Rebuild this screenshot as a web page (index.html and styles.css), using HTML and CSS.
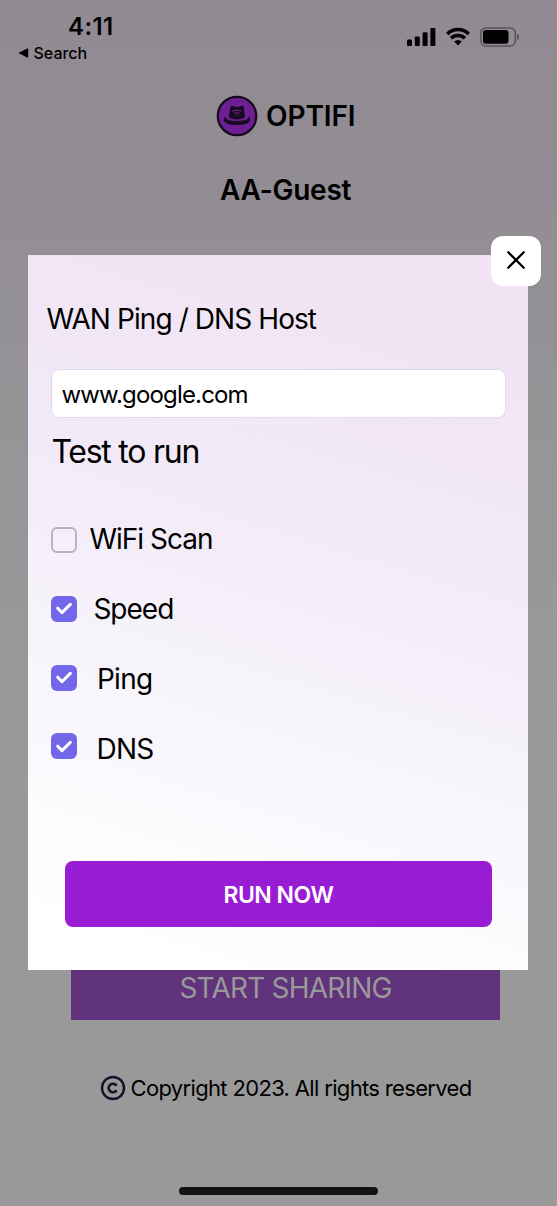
FILE: index.html
```html
<!DOCTYPE html>
<html lang="en">
<head>
<meta charset="utf-8">
<title>Optifi</title>
<link rel="stylesheet" href="styles.css">
</head>
<body>
<div class="screen">
  <header class="status">
    <div class="status-left">
      <div class="time">4:11</div>
      <div class="back"><svg width="11" height="10" viewBox="0 0 11 10"><path d="M.4 5 9.2.5Q10.2 0 10.2 1v8q0 1-1 .5Z"/></svg><span class="back-label">Search</span></div>
    </div>
    <div class="status-icons">
      <svg width="29" height="19" viewBox="0 0 29 19"><rect x="0" y="12.5" width="5" height="6.5" rx="1.2"/><rect x="7.8" y="9.5" width="5" height="9.5" rx="1.2"/><rect x="15.6" y="5.3" width="5" height="13.7" rx="1.2"/><rect x="23.4" y="1" width="5" height="18" rx="1.2"/></svg>
      <svg class="wifi" width="24" height="19" viewBox="0 0 24 18"><g fill="none" stroke="#000" stroke-width="3.4"><path d="M1.2 6.5a15.3 15.3 0 0 1 21.6 0"/><path d="M5.1 10.8a9.8 9.8 0 0 1 13.8 0"/></g><path d="M8.2 14.1a5.5 5.5 0 0 1 7.6 0L12 18Z"/></svg>
      <svg class="battery" width="40" height="20" viewBox="0 0 40 20"><rect x=".9" y=".9" width="34.4" height="18" rx="5" fill="none" stroke="#58545a" stroke-width="1.5"/><rect x="3" y="3" width="25.5" height="13.8" rx="3"/><path d="M37 6.5q2 .8 2 3.4t-2 3.4Z" fill="#58545a"/></svg>
    </div>
  </header>

  <div class="brand">
    <svg width="42" height="42" viewBox="0 0 42 42">
      <circle cx="21" cy="21" r="19.2" fill="#6e1f93" stroke="#170a20" stroke-width="2.3"/>
      <path d="M13 22.5 14.2 12.6q.4-2.6 2.8-1.5 4 2 8 0 2.4-1.1 2.8 1.5L29 22.5q-8 4-16 0Z" fill="#170a20"/>
      <path d="M8.6 22.2Q5.5 29.6 21 29.6t12.4-7.4Q32 26.4 21 26.4T8.6 22.2Z" fill="#170a20" stroke="#170a20" stroke-width=".8" stroke-linejoin="round"/>
      <g fill="none" stroke="#6e1f93" stroke-width="1.1"><path d="M16.4 16.2q4.6-2.2 9.2 0"/><path d="M18.2 18.4q2.8-1.4 5.6 0"/></g><circle cx="21" cy="20.3" r=".8" fill="#6e1f93"/>
    </svg>
    <span class="brand-name">OPTIFI</span>
  </div>
  <h1 class="network">AA-Guest</h1>

  <main class="modal">
    <button class="close" aria-label="Close"><svg width="18" height="18" viewBox="0 0 18 18"><path d="m1.3 1.3 15.4 15.4M16.7 1.3 1.3 16.7" fill="none" stroke="#000" stroke-width="2.3" stroke-linecap="round"/></svg></button>
    <label class="host-label" for="host">WAN Ping / DNS Host</label>
    <input class="host" id="host" value="www.google.com">
    <h2 class="tests-title">Test to run</h2>
    <div class="tests">
      <div class="test"><span class="box"></span><span class="test-name wifi-scan">WiFi Scan</span></div>
      <div class="test"><span class="box checked"><svg width="16" height="13" viewBox="0 0 16 13"><path d="m1.7 6.2 4.3 4.4 8.3-8.2"/></svg></span><span class="test-name speed">Speed</span></div>
      <div class="test"><span class="box checked"><svg width="16" height="13" viewBox="0 0 16 13"><path d="m1.7 6.2 4.3 4.4 8.3-8.2"/></svg></span><span class="test-name ping">Ping</span></div>
      <div class="test"><span class="box checked"><svg width="16" height="13" viewBox="0 0 16 13"><path d="m1.7 6.2 4.3 4.4 8.3-8.2"/></svg></span><span class="test-name dns">DNS</span></div>
    </div>
    <button class="run"><span class="run-label">RUN NOW</span></button>
  </main>

  <div class="share"><span class="share-label">START SHARING</span></div>
  <footer class="footer">
    <svg width="26" height="26" viewBox="0 0 26 26" fill="none" stroke="#1c1028"><circle cx="13" cy="13" r="11" stroke-width="2.4"/><path d="M16.6 10.7a4.3 4.3 0 1 0 0 4.6" stroke-width="2.6"/></svg>
    <span class="copyright">Copyright 2023. All rights reserved</span>
  </footer>
  <div class="home"></div>
</div>
</body>
</html>
```
FILE: styles.css
```css
* { box-sizing: border-box; }
body { margin: 0; font-family: Inter, "Liberation Sans", sans-serif; color: #000; }
svg { display: block; flex: none; }
.screen {
  width: 557px; height: 1206px; overflow: hidden;
  display: flex; flex-direction: column;
  background: linear-gradient(180deg, #918a92 0, #928d94 200px, #969798 500px, #999 800px);
}
.status { height: 94px; display: flex; justify-content: space-between; flex: none; }
.time { margin: 12px 0 0 68px; font-size: 24px; line-height: 30px; font-weight: 600; letter-spacing: .4px; }
.back { display: flex; align-items: center; height: 24px; margin: -1px 0 0 17.5px; }
.back-label { margin-left: 5px; font-size: 16px; font-weight: 500; }
.status-icons { display: flex; align-items: flex-start; padding: 27px 37px 0 0; }
.wifi { margin-left: 9.5px; }
.battery { margin-left: 10.5px; }
.brand { height: 43px; display: flex; align-items: center; padding-left: 216px; flex: none; }
.brand-name { margin-left: 8px; font-size: 28px; font-weight: 600; letter-spacing: -.1px; }
.network { margin: 35px 0 0 220px; font-size: 28px; line-height: 36px; font-weight: 600; letter-spacing: -.25px; flex: none; }
.modal {
  position: relative; z-index: 1; flex: none;
  width: 500px; height: 714.5px; margin: 47px 0 0 28.4px;
  display: flex; flex-direction: column; align-items: flex-start;
  background: linear-gradient(197deg, #f1e2f4 0%, #f1e5f5 16%, #f2eaf8 38%, #f6f2fa 57%, #faf8fc 73%, #fefeff 90%, #fff 100%);
}
.close {
  position: absolute; top: -19.5px; right: -12.5px; width: 50px; height: 50px;
  display: flex; align-items: center; justify-content: center; padding: 0 0 1px 1px;
  border: 0; border-radius: 12px; background: #fff;
}
.host-label { margin: 45.5px 0 0 18px; font-size: 28px; line-height: 36px; letter-spacing: -.92px; white-space: nowrap; }
.host {
  width: 455px; height: 49px; margin: 32.5px 0 0 22.5px; padding: 2px 10px 0 9.5px;
  border: 1px solid #e0d9e8; border-radius: 8px; background: #fff; color: #000;
  font: 24px Inter, "Liberation Sans", sans-serif; letter-spacing: -.84px;
}
.tests-title { margin: 14px 0 0 23px; font-size: 32px; line-height: 40px; font-weight: 400; letter-spacing: -1.25px; }
.tests { margin: 50px 0 0 22.5px; display: grid; gap: 32.8px; }
.test { height: 36px; display: flex; align-items: center; }
.box { width: 26px; height: 26px; border: 2px solid #b9b3bd; border-radius: 6px; display: flex; align-items: center; justify-content: center; flex: none; }
.checked { border: 0; background: #7167e8; }
.box path { fill: none; stroke: #fff; stroke-width: 3; stroke-linecap: round; stroke-linejoin: round; }
.test-name { font-size: 28px; line-height: 36px; white-space: nowrap; letter-spacing: -1px; }
.wifi-scan { margin: 0 0 2px 12.5px; }
.speed { margin: 1px 0 0 16.5px; }
.ping { margin: 3px 0 0 20px; letter-spacing: -.7px; }
.dns { margin: 5px 0 0 19.5px; letter-spacing: -.7px; }
.run {
  width: 427px; height: 66px; margin: 96.3px 0 0 36.5px; padding: 2px 0 0;
  border: 0; border-radius: 8px; background: #991cd5; color: #fff;
  font: 600 23px Inter, "Liberation Sans", sans-serif; letter-spacing: -.5px;
}
.share { width: 429px; height: 51px; margin: -.5px 0 0 71px; background: #61337d; color: #999; text-align: center; font-size: 28px; line-height: 39px; letter-spacing: -.8px; flex: none; }
.footer { display: flex; align-items: center; height: 32px; margin: 52px 0 0 100px; flex: none; }
.copyright { margin-left: 4.5px; font-size: 22px; letter-spacing: -.66px; white-space: nowrap; }
.home { width: 199px; height: 8px; margin: 83px 0 0 179px; border-radius: 4px; background: #131313; flex: none; }
```
